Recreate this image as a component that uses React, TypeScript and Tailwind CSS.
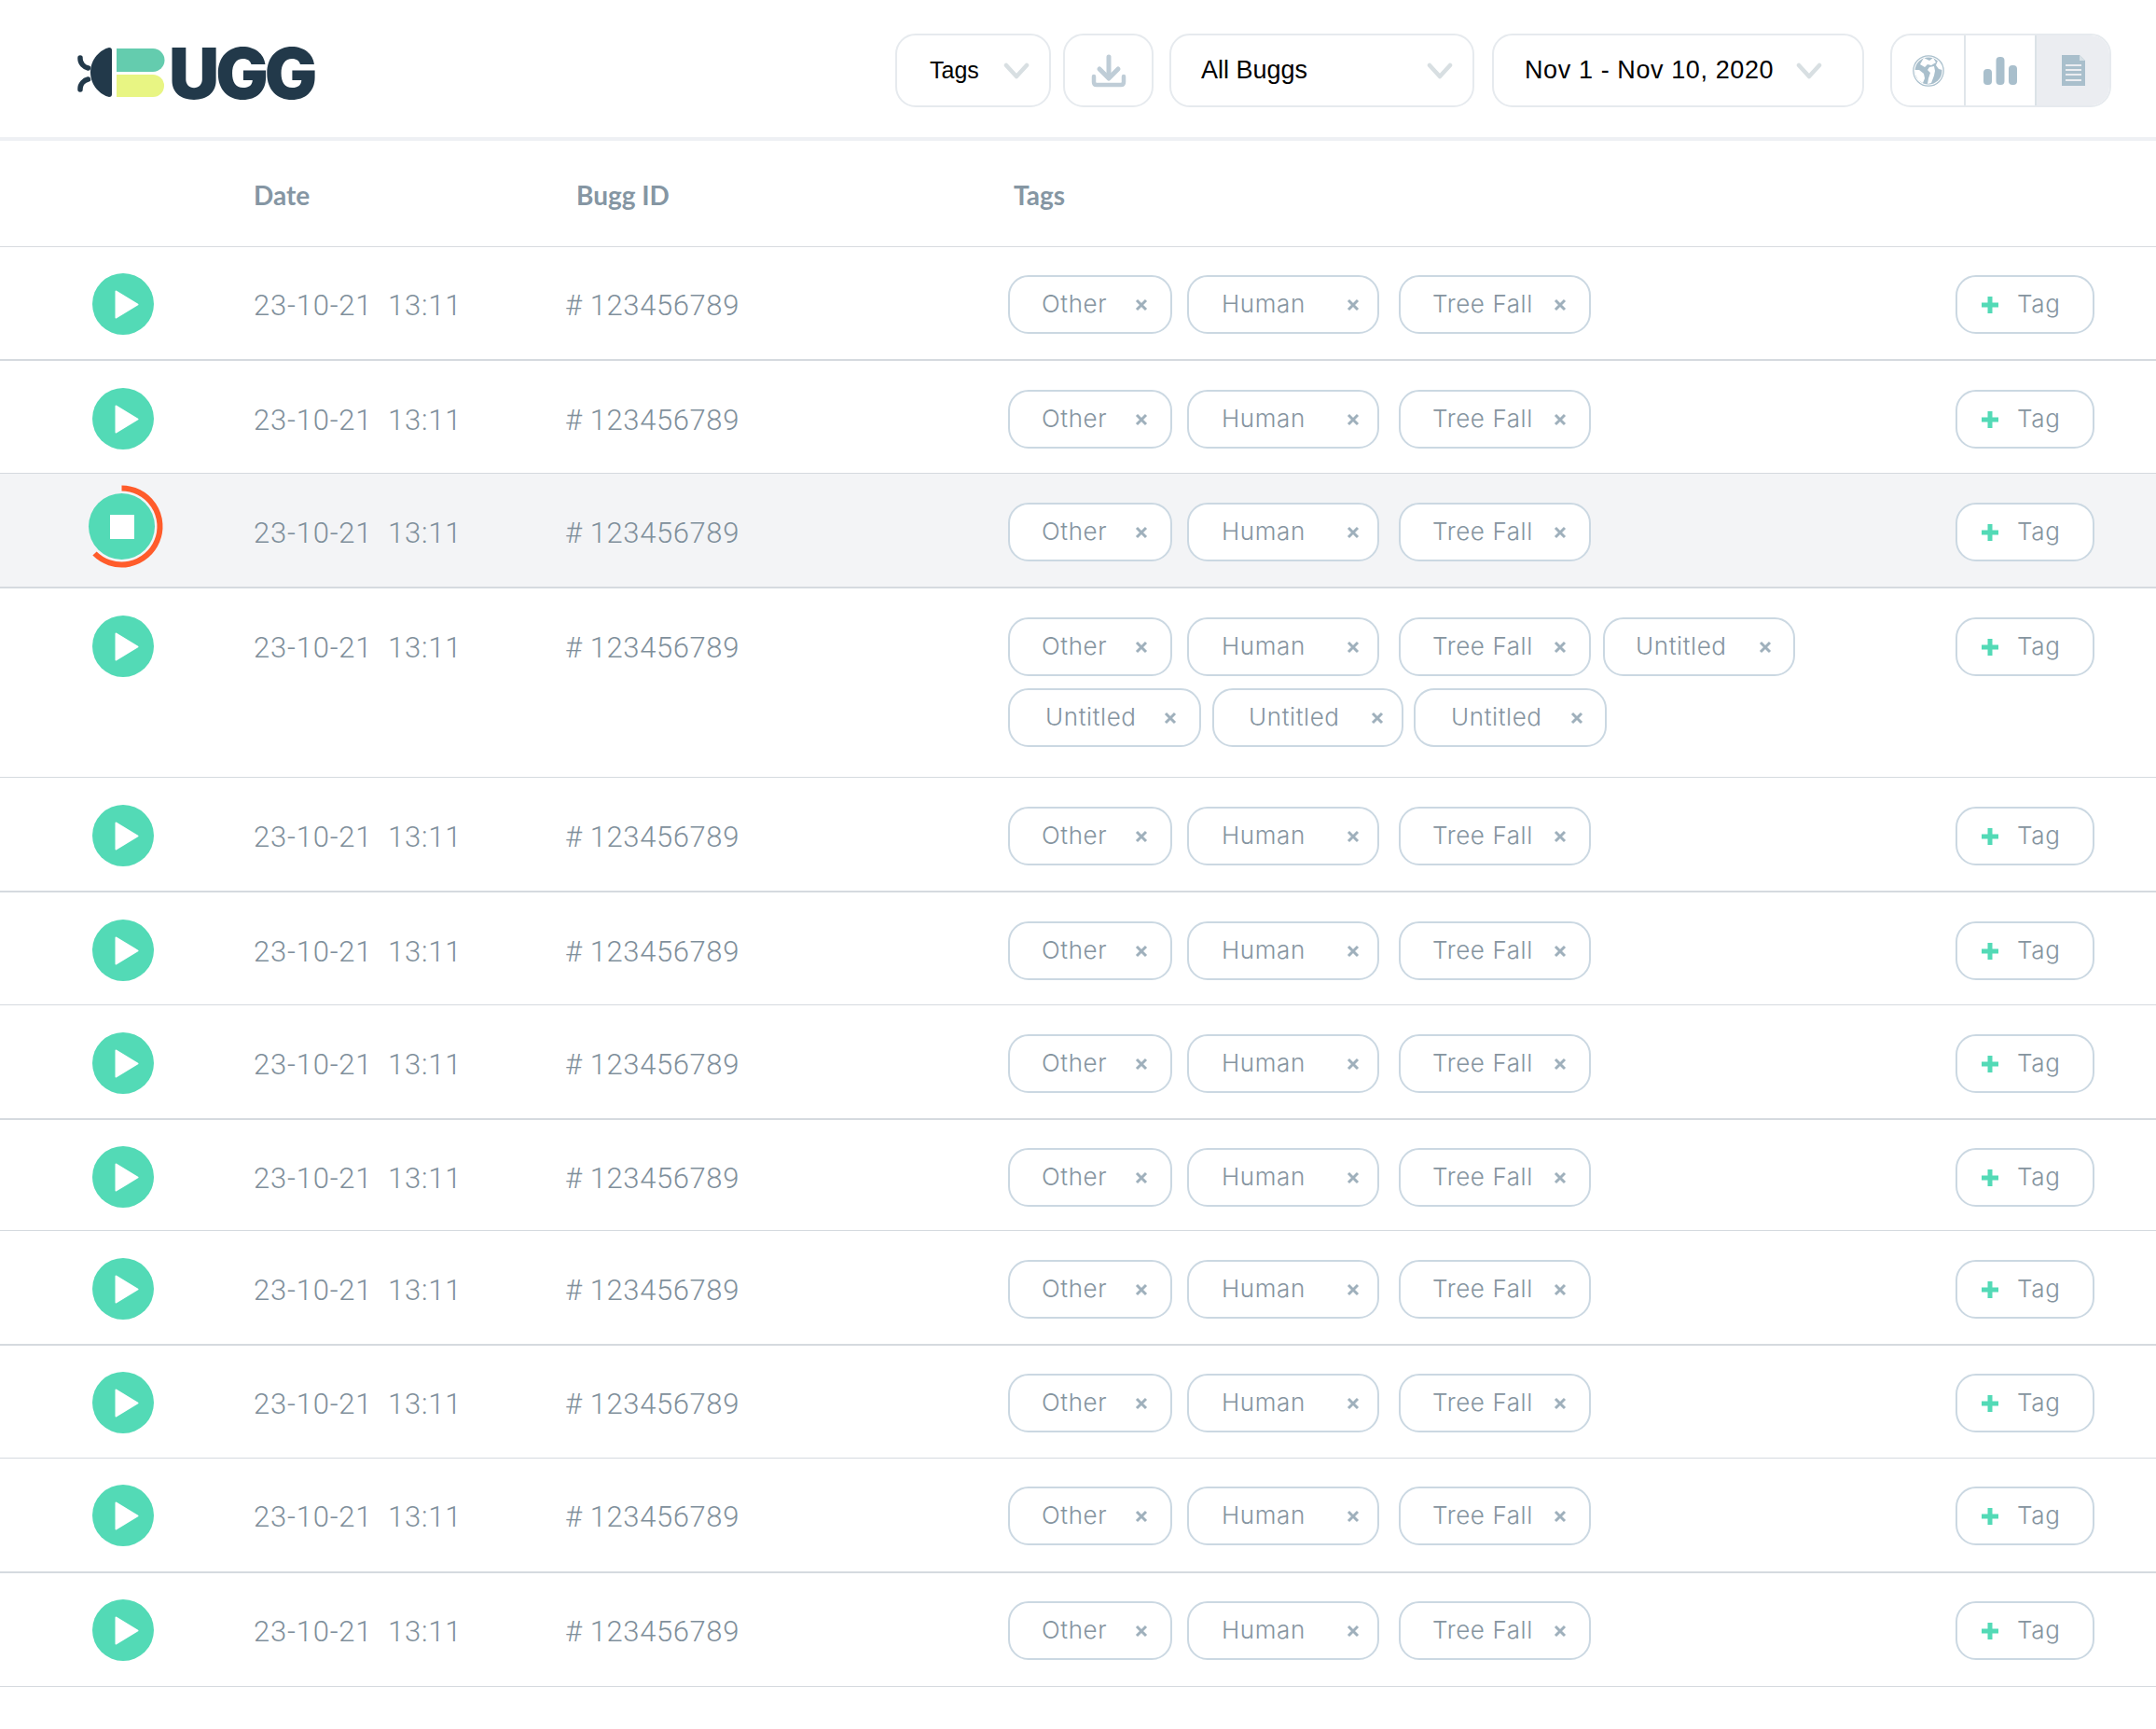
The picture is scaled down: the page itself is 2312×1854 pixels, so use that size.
const rows = [
    { height: 'h-[122px] border-b-2', top: 'pt-0' },
    { height: 'h-[121px] border-b', top: 'pt-px' },
    { height: 'h-[123px] border-b-2', top: 'pt-px' },
    { height: 'h-[203px] border-b', top: 'pt-px' },
    { height: 'h-[123px] border-b-2', top: 'pt-px' },
    { height: 'h-[121px] border-b', top: 'pt-px' },
    { height: 'h-[123px] border-b-2', top: 'pt-px' },
    { height: 'h-[119px] border-b', top: 'pt-0' },
    { height: 'h-[123px] border-b-2', top: 'pt-px' },
    { height: 'h-[121px] border-b', top: 'pt-0' },
    { height: 'h-[123px] border-b-2', top: 'pt-0' },
    { height: 'h-[122px] border-b', top: 'pt-0' },
];

const Chevron = () => (
    <svg viewBox="0 0 28 18" className="h-[18px] w-[28px]" fill="none" stroke="#d8dfe2" strokeWidth="4.5" strokeLinecap="round" strokeLinejoin="round">
        <path d="M3 3l11 12L25 3" />
    </svg>
);

const Logo = () => (
    <div className="mt-[8px] flex items-center">
        <svg width="96" height="54" viewBox="0 0 96 54" className="mr-[3px] shrink-0">
            <path d="M4 11v1c0 5 4 9 8.500 10" fill="none" stroke="#22394a" strokeWidth="5.500" strokeLinecap="round" />
            <path d="M4 45v-1c0-5 4-9 8.500-10" fill="none" stroke="#22394a" strokeWidth="5.500" strokeLinecap="round" />
            <path d="M35 0c2 0 3 1 3 3v47c0 2-1 3-3 3-9-2-20-12-20-26.500S26 2 35 0z" fill="#22394a" />
            <path d="M43 1h39a12.500 12.500 0 0 1 0 25H43z" fill="#64ccae" />
            <path d="M43 29h39a12 12 0 0 1 0 24H43z" fill="#e8f583" />
        </svg>
        <span className="mt-[2px] font-['Inter',sans-serif] text-[75px] leading-none font-black tracking-[-4px] text-[#22394a]">
            UGG
        </span>
    </div>
);

const SelectBox = ({ label, className, text }: { label: string; className: string; text: string }) => (
    <div className={`flex h-[79px] items-center justify-between rounded-[22px] border-2 border-[#e6eaee] bg-white text-black ${className}`}>
        <span className={`font-['Liberation_Sans',sans-serif] ${text}`}>{label}</span>
        <Chevron />
    </div>
);

const Globe = () => (
    <svg width="34" height="34" viewBox="0 0 34 34">
        <circle cx="17" cy="17" r="16.200" fill="#fff" stroke="#a9bfcc" strokeWidth="1.200" />
        <circle cx="17" cy="17" r="14.500" fill="#a9bfcc" />
        <path d="M12 3l6 3 4-3 3 5-5 3-4-1-3 3-5-3z" fill="#fff" />
        <path d="M18 13l5-1 1 5-1 5-3 8-4 1 1-6 2-6-3-3z" fill="#fff" />
        <path d="M2 16l5 0 5 4 1 5-2 5-5-3-3-6z" fill="#fff" />
        <path d="M27 6l4 5 1 5-4-1-3-4z" fill="#fff" />
    </svg>
);

const Toolbar = () => (
    <div className="mt-[4px] flex items-center">
        <SelectBox label="Tags" text="text-[25px]" className="w-[167px] pr-[21px] pl-[35px]" />
        <div className="ml-[13px] flex h-[79px] w-[97px] items-center justify-center rounded-[22px] border-2 border-[#e6eaee]">
            <svg width="38" height="36" viewBox="0 0 38 36" fill="none" stroke="#bfcdd7" strokeLinecap="round" strokeLinejoin="round">
                <path d="M19 3v21" strokeWidth="5" />
                <path d="M9 16l10 10 10-10" strokeWidth="5" />
                <path d="M3 24v6c0 2 1 3 3 3h26c2 0 3-1 3-3v-6" strokeWidth="4.500" />
            </svg>
        </div>
        <SelectBox label="All Buggs" text="text-[27px]" className="ml-[17px] w-[327px] pr-[21px] pl-[32px]" />
        <SelectBox label="Nov 1 - Nov 10, 2020" text="text-[27px] tracking-[0.6px]" className="ml-[19px] w-[399px] pr-[43px] pl-[33px]" />
        <div className="ml-[28px] flex h-[79px] w-[237px] overflow-hidden rounded-[22px] border-2 border-[#e6eaee]">
            <div className="flex w-[79px] items-center justify-center border-r-2 border-[#e0e6ea]">
                <Globe />
            </div>
            <div className="flex w-[76px] items-center justify-center border-r-2 border-[#dbe2e7]">
                <svg width="36" height="30" viewBox="0 0 36 30" fill="#a9bfcc">
                    <rect x="0" y="13" width="9" height="17" rx="4" />
                    <rect x="13.500" y="0" width="9" height="30" rx="4" />
                    <rect x="27" y="9" width="9" height="21" rx="4" />
                </svg>
            </div>
            <div className="flex flex-1 items-center justify-center bg-[#ebedf1]">
                <svg width="26" height="33" viewBox="0 0 26 33">
                    <path d="M1 0h19l6 6v27H1z" fill="#a9bfcc" />
                    <path d="M20 0l6 6h-6z" fill="#d6e0e6" />
                    <path d="M5 11h17M5 16h17M5 21h17M5 27h17" stroke="#ebedf1" strokeWidth="2" />
                </svg>
            </div>
        </div>
    </div>
);

const PlayButton = () => (
    <div className="mt-[28px] flex h-[66px] w-[66px] items-center justify-center rounded-full bg-[#53dab6]">
        <svg width="26" height="31" viewBox="0 0 26 31" className="ml-[7px]" fill="#fff" stroke="#fff" strokeWidth="2" strokeLinejoin="round">
            <path d="M1.500 1.500L24.500 15.500 1.500 29.500z" />
        </svg>
    </div>
);

const StopButton = () => (
    <div className="relative mt-[20px] -ml-[3px] flex h-[71px] w-[71px] items-center justify-center rounded-full bg-[#53dab6]">
        <div className="h-[26px] w-[26px] bg-white" />
        <svg width="96" height="96" viewBox="0 0 96 96" className="absolute top-[-12px] left-[-12px]" fill="none">
            <path d="M47.500 6.500A41 41 0 1 1 18.500 76.500" stroke="#ff5c2b" strokeWidth="6" />
        </svg>
    </div>
);

const Pill = ({ label, className }: { label: string; className: string }) => (
    <div className={`flex h-[63px] items-center justify-between rounded-[22px] border-2 border-[#cbd8e2] bg-white font-['Inter',sans-serif] text-[26px] font-light tracking-[0.6px] text-[#85949f] ${className}`}>
        <span className="mb-[2px]">{label}</span>
        <svg width="14" height="14" viewBox="0 0 14 14" stroke="#9fb0bc" strokeWidth="3">
            <path d="M2 2l10 10M12 2L2 12" />
        </svg>
    </div>
);

const Tags = () => (
    <>
        <Pill label="Other" className="w-[176px] pr-[24px] pl-[34px]" />
        <Pill label="Human" className="ml-[16px] w-[206px] pr-[19px] pl-[35px]" />
        <Pill label="Tree Fall" className="ml-[21px] w-[206px] pr-[24px] pl-[34px]" />
    </>
);

const Row = ({ index }: { index: number }) => {
    const active = index === 2;
    const textClass = "pt-[41px] font-['Roboto',sans-serif] text-[31px] leading-[44px] font-light whitespace-nowrap text-[#7f8f9b]";
    return (
        <div className={`grid grid-cols-[272px_334px_475px_1fr] border-[#d5dadf] ${rows[index].height} ${rows[index].top} ${active ? 'bg-[#f3f4f6]' : 'bg-white'}`}>
            <div className="flex w-[264px] items-start justify-center">
                {active ? <StopButton /> : <PlayButton />}
            </div>
            <div className={`${textClass} tracking-[0.8px]`}>23-10-21&nbsp;&nbsp;13:11</div>
            <div className={`${textClass} tracking-[0.6px]`}># 123456789</div>
            <div className="flex items-start justify-between pt-[30px] pr-[66px]">
                <div className="flex flex-col">
                    <div className="flex">
                        <Tags />
                        {index === 3 && <Pill label="Untitled" className="ml-[13px] w-[206px] pr-[23px] pl-[33px]" />}
                    </div>
                    {index === 3 && (
                        <div className="mt-[13px] flex">
                            <Pill label="Untitled" className="w-[207px] pr-[24px] pl-[38px]" />
                            <Pill label="Untitled" className="ml-[12px] w-[205px] pr-[19px] pl-[37px]" />
                            <Pill label="Untitled" className="ml-[11px] w-[207px] pr-[23px] pl-[38px]" />
                        </div>
                    )}
                </div>
                <div className="flex h-[63px] w-[149px] items-center rounded-[22px] border-2 border-[#cbd8e2] bg-white pl-[26px] font-['Inter',sans-serif] text-[26px] font-light tracking-[0.7px] text-[#85949f]">
                    <svg width="18" height="18" viewBox="0 0 18 18" stroke="#53dab6" strokeWidth="5">
                        <path d="M9 0v18M0 9h18" />
                    </svg>
                    <span className="mb-[2px] ml-[20px]">Tag</span>
                </div>
            </div>
        </div>
    );
};

export default function App() {
    return (
        <div className="min-h-[1854px] w-[2312px] bg-white">
            <header className="flex h-[151px] items-center justify-between border-b-4 border-[#eef0f4] pr-[48px] pl-[82px]">
                <Logo />
                <Toolbar />
            </header>
            <div className="grid h-[114px] grid-cols-[272px_346px_469px_1fr] border-b border-[#d8dce0] pt-[41px] font-['Lato',sans-serif] text-[28px] leading-[34px] font-bold text-[#8596a3]">
                <div />
                <div>Date</div>
                <div>Bugg ID</div>
                <div>Tags</div>
            </div>
            {rows.map((_, index) => (
                <Row key={index} index={index} />
            ))}
        </div>
    );
}
